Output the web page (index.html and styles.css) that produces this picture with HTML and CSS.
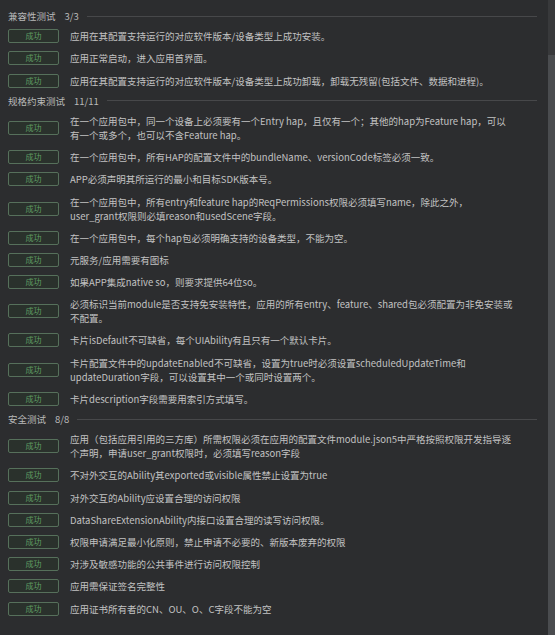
FILE: index.html
```html
<!DOCTYPE html>
<html>
<head>
  <meta charset="utf-8">
  <title>测试报告</title>
  <link rel="stylesheet" href="styles.css">
</head>
<body>
  <div class="window">
    <div class="report">

      <section class="group">
        <div class="group-head">
          <span class="group-title">兼容性测试</span>
          <span class="group-count">3/3</span>
          <span class="group-rule"></span>
        </div>
        <div class="case"><span class="badge">成功</span><span class="case-text">应用在其配置支持运行的对应软件版本/设备类型上成功安装。</span></div>
        <div class="case"><span class="badge">成功</span><span class="case-text">应用正常启动，进入应用首界面。</span></div>
        <div class="case"><span class="badge">成功</span><span class="case-text">应用在其配置支持运行的对应软件版本/设备类型上成功卸载，卸载无残留(包括文件、数据和进程)。</span></div>
      </section>

      <section class="group">
        <div class="group-head">
          <span class="group-title">规格约束测试</span>
          <span class="group-count">11/11</span>
          <span class="group-rule"></span>
        </div>
        <div class="case"><span class="badge">成功</span><span class="case-text">在一个应用包中，同一个设备上必须要有一个Entry hap，且仅有一个；其他的hap为Feature hap，可以<br>有一个或多个，也可以不含Feature hap。</span></div>
        <div class="case"><span class="badge">成功</span><span class="case-text">在一个应用包中，所有HAP的配置文件中的bundleName、versionCode标签必须一致。</span></div>
        <div class="case"><span class="badge">成功</span><span class="case-text">APP必须声明其所运行的最小和目标SDK版本号。</span></div>
        <div class="case"><span class="badge">成功</span><span class="case-text">在一个应用包中，所有entry和feature hap的ReqPermissions权限必须填写name，除此之外，<br>user_grant权限则必填reason和usedScene字段。</span></div>
        <div class="case"><span class="badge">成功</span><span class="case-text">在一个应用包中，每个hap包必须明确支持的设备类型，不能为空。</span></div>
        <div class="case"><span class="badge">成功</span><span class="case-text">元服务/应用需要有图标</span></div>
        <div class="case"><span class="badge">成功</span><span class="case-text">如果APP集成native so，则要求提供64位so。</span></div>
        <div class="case"><span class="badge">成功</span><span class="case-text">必须标识当前module是否支持免安装特性，应用的所有entry、feature、shared包必须配置为非免安装或<br>不配置。</span></div>
        <div class="case"><span class="badge">成功</span><span class="case-text">卡片isDefault不可缺省，每个UIAbility有且只有一个默认卡片。</span></div>
        <div class="case"><span class="badge">成功</span><span class="case-text">卡片配置文件中的updateEnabled不可缺省，设置为true时必须设置scheduledUpdateTime和<br>updateDuration字段，可以设置其中一个或同时设置两个。</span></div>
        <div class="case"><span class="badge">成功</span><span class="case-text">卡片description字段需要用索引方式填写。</span></div>
      </section>

      <section class="group">
        <div class="group-head">
          <span class="group-title">安全测试</span>
          <span class="group-count">8/8</span>
          <span class="group-rule"></span>
        </div>
        <div class="case"><span class="badge">成功</span><span class="case-text">应用（包括应用引用的三方库）所需权限必须在应用的配置文件module.json5中严格按照权限开发指导逐<br>个声明，申请user_grant权限时，必须填写reason字段</span></div>
        <div class="case"><span class="badge">成功</span><span class="case-text">不对外交互的Ability其exported或visible属性禁止设置为true</span></div>
        <div class="case"><span class="badge">成功</span><span class="case-text">对外交互的Ability应设置合理的访问权限</span></div>
        <div class="case"><span class="badge">成功</span><span class="case-text">DataShareExtensionAbility内接口设置合理的读写访问权限。</span></div>
        <div class="case"><span class="badge">成功</span><span class="case-text">权限申请满足最小化原则，禁止申请不必要的、新版本废弃的权限</span></div>
        <div class="case"><span class="badge">成功</span><span class="case-text">对涉及敏感功能的公共事件进行访问权限控制</span></div>
        <div class="case"><span class="badge">成功</span><span class="case-text">应用需保证签名完整性</span></div>
        <div class="case"><span class="badge">成功</span><span class="case-text">应用证书所有者的CN、OU、O、C字段不能为空</span></div>
      </section>

    </div>
    <div class="scrollbar"><div class="scroll-thumb"></div></div>
  </div>
</body>
</html>
```

FILE: styles.css
```css
html, body {
  margin: 0;
  height: 100%;
}
body {
  background-color: #2c2d2f;
  color: #c2c2c2;
  font-family: "Noto Sans CJK SC", "Liberation Sans", sans-serif;
  font-size: 9.5px;
  overflow: hidden;
}
.window {
  display: flex;
  height: 100%;
}
.report {
  flex: 1;
  display: flex;
  flex-direction: column;
  gap: 6.2px;
  padding: 10px 11px 0 8px;
  min-width: 0;
}
.group {
  display: flex;
  flex-direction: column;
  gap: 6.2px;
}
.group-head {
  display: flex;
  align-items: center;
  height: 12px;
  line-height: 12px;
  color: #b9b9b9;
}
.group-count {
  margin-left: 9px;
}
.group-rule {
  flex: 1;
  height: 1px;
  margin-left: 8px;
  background-color: #47484a;
}
.case {
  display: flex;
  align-items: center;
  gap: 11px;
  min-height: 16px;
  padding: 1px 0;
  box-sizing: border-box;
}
.badge {
  flex: none;
  width: 51px;
  height: 14px;
  box-sizing: border-box;
  border: 1px solid #56705b;
  border-radius: 2px;
  background-color: #2a312c;
  color: #5f9d63;
  font-size: 8px;
  line-height: 12px;
  text-align: center;
}
.case-text {
  line-height: 14px;
  white-space: nowrap;
}
.scrollbar {
  flex: none;
  width: 7px;
  background-color: #38393b;
  padding-top: 55px;
  display: flex;
}
.scroll-thumb {
  flex: 1;
  background-color: #4a4c4f;
}
```
